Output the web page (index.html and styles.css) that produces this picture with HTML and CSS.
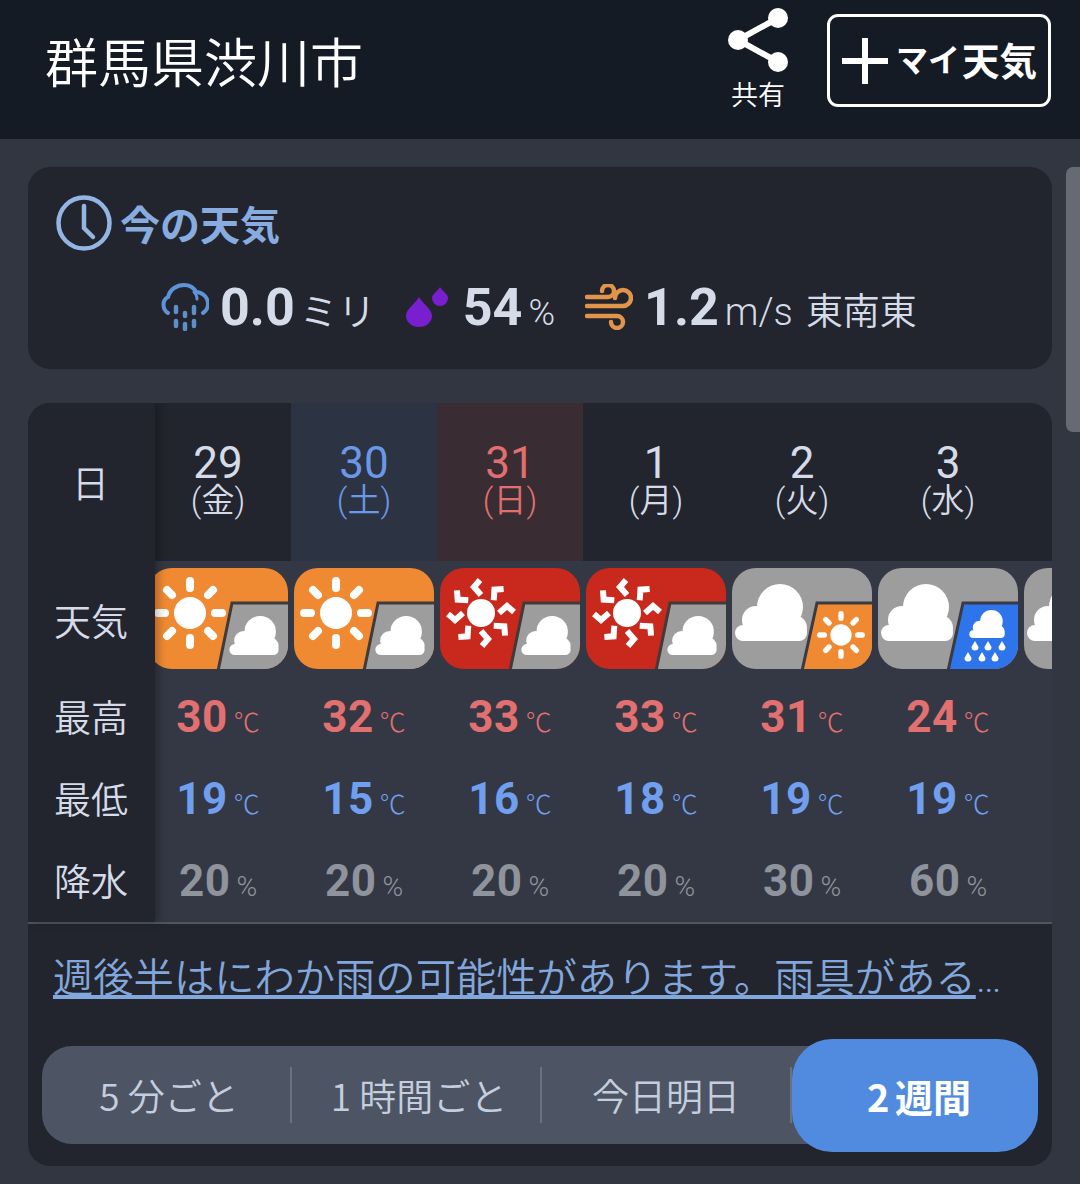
FILE: index.html
```html
<!DOCTYPE html>
<html lang="ja">
<head>
<meta charset="utf-8">
<title>群馬県渋川市</title>
<link rel="stylesheet" href="styles.css">
</head>
<body>
<svg class="defs" width="0" height="0" aria-hidden="true">
  <defs>
    <clipPath id="round"><rect width="140" height="101" rx="24"/></clipPath>
    <symbol id="cloud" viewBox="0 0 72 57">
      <circle cx="45" cy="23" r="23" fill="#fff"/>
      <circle cx="21" cy="36" r="14" fill="#fff"/>
      <circle cx="59" cy="44" r="13" fill="#fff"/>
      <rect y="41" width="72" height="16" rx="8" fill="#fff"/>
      <rect x="20" y="25" width="40" height="30" fill="#fff"/>
    </symbol>
    <symbol id="sun" viewBox="-36 -36 72 72">
      <circle r="16" fill="#fff"/>
      <g stroke="#fff" stroke-width="8" stroke-linecap="round" class="rays">
        <path d="M0-32V-25M0 32V25M-32 0H-25M32 0H25M-23-23L-18-18M23-23L18-18M-23 23L-18 18M23 23L18 18"/>
      </g>
    </symbol>
    <symbol id="hot" viewBox="-36 -36 72 72">
      <circle r="14" fill="#fff"/>
      <g fill="none" stroke="#fff" stroke-width="6">
        <path id="chev" d="M-1-33L-7-26L0-18"/>
        <use href="#chev" transform="rotate(45)"/>
        <use href="#chev" transform="rotate(90)"/>
        <use href="#chev" transform="rotate(135)"/>
        <use href="#chev" transform="rotate(180)"/>
        <use href="#chev" transform="rotate(225)"/>
        <use href="#chev" transform="rotate(270)"/>
        <use href="#chev" transform="rotate(315)"/>
      </g>
    </symbol>
    <symbol id="sun-cloud" viewBox="0 0 140 101">
      <g clip-path="url(#round)">
        <rect width="140" height="101" fill="#f08a32"/>
        <use href="#sun" x="6" y="9" width="72" height="72"/>
        <path d="M84 35H142V103H70Z" fill="#9d9d9d" stroke="#41393a" stroke-width="3"/>
        <use href="#cloud" x="81" y="48" width="50" height="39"/>
      </g>
    </symbol>
    <symbol id="hot-cloud" viewBox="0 0 140 101">
      <g clip-path="url(#round)">
        <rect width="140" height="101" fill="#c9281c"/>
        <use href="#hot" x="5" y="9" width="72" height="72"/>
        <path d="M84 35H142V103H70Z" fill="#9d9d9d" stroke="#41393a" stroke-width="3"/>
        <use href="#cloud" x="81" y="48" width="50" height="39"/>
      </g>
    </symbol>
    <symbol id="cloud-sun" viewBox="0 0 140 101">
      <g clip-path="url(#round)">
        <rect width="140" height="101" fill="#9d9d9d"/>
        <use href="#cloud" x="3" y="16" width="72" height="57"/>
        <path d="M85 35H142V103H70Z" fill="#f08a32" stroke="#3a3a42" stroke-width="3"/>
        <use href="#sun" x="85" y="43" width="48" height="48"/>
      </g>
    </symbol>
    <symbol id="cloud-rain" viewBox="0 0 140 101">
      <g clip-path="url(#round)">
        <rect width="140" height="101" fill="#9d9d9d"/>
        <use href="#cloud" x="3" y="16" width="72" height="57"/>
        <path d="M85 35H142V103H70Z" fill="#2e75ec" stroke="#3a3a42" stroke-width="3"/>
        <use href="#cloud" x="87" y="42" width="44" height="28"/>
        <g fill="#fff">
          <path id="drop" d="M97 73L100.500 79A3.500 3.500 0 1 1 93.500 79Z"/>
          <use href="#drop" x="13"/>
          <use href="#drop" x="27"/>
          <use href="#drop" x="-7" y="11"/>
          <use href="#drop" x="7" y="11"/>
          <use href="#drop" x="20" y="11"/>
        </g>
      </g>
    </symbol>
  </defs>
</svg>

<header class="top">
  <h1 class="place">群馬県渋川市</h1>
  <div class="share">
    <svg class="share-ico" viewBox="0 0 62 66">
      <path d="M51 11L11 33L51 55" fill="none" stroke="#fff" stroke-width="6"/>
      <circle cx="51" cy="11" r="10" fill="#fff"/>
      <circle cx="11" cy="33" r="10" fill="#fff"/>
      <circle cx="51" cy="55" r="10" fill="#fff"/>
    </svg>
    <span class="share-label">共有</span>
  </div>
  <div class="my">
    <svg class="plus" viewBox="0 0 46 46"><path d="M23 0V46M0 23H46" stroke="#fff" stroke-width="6"/></svg>
    <span class="my-kana">マイ</span><span class="my-kanji">天気</span>
  </div>
</header>

<main class="page">
  <section class="card now">
    <h2 class="now-title">
      <svg class="clock" viewBox="0 0 56 56" fill="none" stroke="#93b5e3" stroke-width="4.500">
        <circle cx="28" cy="28" r="25.500"/>
        <path d="M28 11V33L37 42" stroke-linecap="round"/>
      </svg>
      <span>今の天気</span>
    </h2>
    <div class="now-values">
      <svg class="ico rain-ico" viewBox="0 0 48 48">
        <path d="M7 30C1 26 1 17 7 14C9 6 16 2 23 2C29 2 33 5 35 9C41 9 47 14 47 21C47 25 45 28 42 30" fill="none" stroke="#5f93d8" stroke-width="4" stroke-linecap="round"/>
        <path d="M33 9C35 11 36 13 36 16" fill="none" stroke="#5f93d8" stroke-width="3" stroke-linecap="round"/>
        <g stroke="#5f8ec8" stroke-width="4.500" stroke-linecap="round">
          <path d="M15 24V29M15 38V43M24 30V33M24 41V46M33 24V30M33 38V43"/>
        </g>
      </svg>
      <b class="big rain-val">0.0</b><span class="unit mm">ミリ</span>
      <svg class="ico drop-ico" viewBox="0 0 42 40">
        <path d="M13 10C17 17 26 22 26 29A13 11 0 0 1 0 29C0 22 9 17 13 10Z" fill="#7a1fcf"/>
        <path d="M34 0C36 4 42 7 42 11A8 8 0 0 1 26 11C26 7 32 4 34 0Z" fill="#7a1fcf"/>
      </svg>
      <b class="big hum-val">54</b><span class="unit pct">%</span>
      <svg class="ico wind-ico" viewBox="0 0 48 46" fill="none" stroke="#e0954a" stroke-width="4.500" stroke-linecap="round">
        <path d="M2 13H23A6 6 0 1 0 17 7"/>
        <path d="M2 22H38A8 8 0 1 0 30 14"/>
        <path d="M2 32H32A6 6 0 1 1 26 38"/>
      </svg>
      <b class="big wind-val">1.2</b><span class="unit ms">m/s</span><span class="unit dir">東南東</span>
    </div>
  </section>

  <section class="card week">
    <div class="table">
      <div class="labels">
        <div class="lab lab-day">日</div>
        <div class="lab lab-icon">天気</div>
        <div class="lab lab-row">最高</div>
        <div class="lab lab-row">最低</div>
        <div class="lab lab-row">降水</div>
      </div>
      <div class="scroll">
        <div class="row row-days">
          <div class="day"><span class="num">29</span><span class="dow">(金)</span></div>
          <div class="day sat"><span class="num">30</span><span class="dow">(土)</span></div>
          <div class="day sun"><span class="num">31</span><span class="dow">(日)</span></div>
          <div class="day"><span class="num">1</span><span class="dow">(月)</span></div>
          <div class="day"><span class="num">2</span><span class="dow">(火)</span></div>
          <div class="day"><span class="num">3</span><span class="dow">(水)</span></div>
          <div class="day"></div>
        </div>
        <div class="row row-icons">
          <div class="cell"><svg class="wx"><use href="#sun-cloud"/></svg></div>
          <div class="cell"><svg class="wx"><use href="#sun-cloud"/></svg></div>
          <div class="cell"><svg class="wx"><use href="#hot-cloud"/></svg></div>
          <div class="cell"><svg class="wx"><use href="#hot-cloud"/></svg></div>
          <div class="cell"><svg class="wx"><use href="#cloud-sun"/></svg></div>
          <div class="cell"><svg class="wx"><use href="#cloud-rain"/></svg></div>
          <div class="cell"><svg class="wx"><use href="#cloud-sun"/></svg></div>
        </div>
        <div class="row row-val hi">
          <div class="cell"><b>30</b><i>℃</i></div>
          <div class="cell"><b>32</b><i>℃</i></div>
          <div class="cell"><b>33</b><i>℃</i></div>
          <div class="cell"><b>33</b><i>℃</i></div>
          <div class="cell"><b>31</b><i>℃</i></div>
          <div class="cell"><b>24</b><i>℃</i></div>
          <div class="cell"></div>
        </div>
        <div class="row row-val lo">
          <div class="cell"><b>19</b><i>℃</i></div>
          <div class="cell"><b>15</b><i>℃</i></div>
          <div class="cell"><b>16</b><i>℃</i></div>
          <div class="cell"><b>18</b><i>℃</i></div>
          <div class="cell"><b>19</b><i>℃</i></div>
          <div class="cell"><b>19</b><i>℃</i></div>
          <div class="cell"></div>
        </div>
        <div class="row row-val pop">
          <div class="cell"><b>20</b><i>%</i></div>
          <div class="cell"><b>20</b><i>%</i></div>
          <div class="cell"><b>20</b><i>%</i></div>
          <div class="cell"><b>20</b><i>%</i></div>
          <div class="cell"><b>30</b><i>%</i></div>
          <div class="cell"><b>60</b><i>%</i></div>
          <div class="cell"></div>
        </div>
      </div>
    </div>
    <a class="note" href="#">週後半はにわか雨の可能性があります。雨具があると安心です。</a>
    <nav class="tabs">
      <span class="tab shift">5 分ごと</span>
      <span class="tab shift">1 時間ごと</span>
      <span class="tab">今日明日</span>
      <span class="tab active">2 週間</span>
    </nav>
  </section>
  <div class="scrollbar"></div>
</main>
</body>
</html>
```
FILE: styles.css
```css
* { box-sizing: border-box; }
html, body { margin: 0; height: 1184px; overflow: hidden; }
body {
  background: #323641;
  color: #d5dbe8;
  font-family: Roboto, "Noto Sans CJK JP", sans-serif;
}
.defs { position: absolute; }
.top {
  height: 139px;
  background: #151b25;
  display: flex;
  align-items: flex-start;
  padding: 0 29px 0 45px;
}
.place {
  margin: 0;
  flex: 1;
  font-size: 53px;
  font-weight: 350;
  line-height: 121px;
  color: #fff;
  font-family: "Noto Sans CJK JP", sans-serif;
}
.share {
  width: 62px;
  margin-right: 38px;
  padding-top: 6px;
  display: flex;
  flex-direction: column;
  align-items: center;
}
.share-ico { width: 62px; height: 68px; display: block; }
.share-label {
  font-size: 27px;
  line-height: 36px;
  margin-top: 2px;
  color: #fff;
  font-weight: 350;
  font-family: "Noto Sans CJK JP", sans-serif;
  white-space: nowrap;
}
.my {
  margin-top: 14px;
  width: 224px;
  height: 93px;
  border: 3px solid #fff;
  border-radius: 11px;
  display: flex;
  align-items: center;
  padding: 0 0 5px 12px;
  color: #fff;
  font-family: "Noto Sans CJK JP", sans-serif;
  font-weight: 700;
}
.plus { width: 46px; height: 46px; margin: 5px 8px 0 0; flex: none; }
.my-kana { font-size: 32px; }
.my-kanji { font-size: 37.500px; margin-left: 2px; }

.page {
  position: relative;
  padding: 28px 28px 0;
}
.card {
  background: #22252d;
  border-radius: 22px;
  overflow: hidden;
}
.now { height: 202px; padding: 27px 28px 0; }
.now-title {
  margin: 0;
  height: 58px;
  display: flex;
  align-items: center;
  font-size: 40px;
  font-weight: 700;
  color: #88ace0;
  font-family: "Noto Sans CJK JP", sans-serif;
}
.clock { width: 56px; height: 56px; margin-right: 8px; flex: none; }
.now-values {
  margin-top: 25px;
  margin-left: 105px;
  height: 56px;
  display: flex;
  align-items: baseline;
  white-space: nowrap;
}
.ico { align-self: center; flex: none; margin-top: 4px; }
.rain-ico { width: 48px; height: 48px; }
.drop-ico { width: 42px; height: 40px; margin-left: 30px; }
.wind-ico { width: 48px; height: 46px; margin-left: 30px; }
.big { font-size: 52px; font-weight: 700; }
.rain-val { margin-left: 11px; }
.hum-val { margin-left: 15px; }
.wind-val { margin-left: 11px; }
.unit { font-size: 38px; font-weight: 300; }
.mm { margin-left: 5px; font-weight: 350; font-family: "Noto Sans CJK JP", sans-serif; }
.pct { margin-left: 6px; font-size: 36px; }
.ms { margin-left: 6px; }
.dir { margin-left: 13px; font-size: 37px; font-weight: 350; font-family: "Noto Sans CJK JP", sans-serif; }

.week { margin-top: 34px; height: 763px; }
.table {
  display: grid;
  grid-template-columns: 127px 1fr;
  height: 521px;
  border-bottom: 2px solid #50545e;
}
.labels {
  background: #22252d;
  position: relative;
  box-shadow: 4px 0 8px rgba(0, 0, 0, .25);
  z-index: 1;
}
.lab {
  display: flex;
  align-items: center;
  padding-left: 26px;
  font-size: 37px;
  font-weight: 350;
  font-family: "Noto Sans CJK JP", sans-serif;
}
.lab-day { height: 158px; padding-left: 44px; }
.lab-icon { height: 114px; padding-top: 4px; }
.lab-row { height: 82px; }
.scroll { overflow: hidden; background: #343844; }
.row { display: flex; margin-left: -10px; width: 1022px; }
.row-days { height: 158px; }
.row-icons { height: 114px; padding-top: 7px; }
.row-val { height: 82px; padding-top: 1px; }
.day, .cell { width: 146px; flex: none; }
.day {
  background: #22252d;
  display: flex;
  flex-direction: column;
  align-items: center;
  padding-top: 38px;
}
.num { font-size: 44px; line-height: 45px; }
.dow { font-size: 33px; line-height: 29px; font-weight: 350; }
.sat { background: #2c3342; color: #6a97e8; }
.sun { background: #3a2c33; color: #e07070; }
.cell { display: flex; justify-content: center; align-items: baseline; line-height: 82px; }
.wx { width: 140px; height: 101px; display: block; }
.row-val b { font-size: 44px; font-weight: 700; letter-spacing: .5px; }
.row-val i { font-style: normal; font-size: 26px; margin-left: 6px; font-weight: 300; }
.hi { color: #e27070; }
.lo { color: #6f9fee; }
.pop { color: #8f939c; }
.pop i { font-size: 28px; }
.note {
  display: block;
  margin: 28px 0 0 25px;
  width: 950px;
  height: 56px;
  line-height: 54px;
  font-size: 40.300px;
  font-weight: 350;
  color: #82a7dc;
  white-space: nowrap;
  overflow: hidden;
  text-overflow: ellipsis;
  text-decoration: underline;
}
.tabs {
  margin: 38px 14px 0;
  height: 98px;
  background: #4d5564;
  border-radius: 30px;
  display: flex;
  align-items: center;
}
.tab {
  width: 250px;
  height: 56px;
  line-height: 56px;
  text-align: center;
  font-size: 37px;
  font-weight: 350;
  color: #c4cede;
  border-right: 2px solid #6a7180;
  font-family: "Noto Sans CJK JP", sans-serif;
  white-space: nowrap;
}
.shift { padding-left: 6px; }
.tab.active {
  width: 246px;
  height: 113px;
  line-height: 113px;
  padding-left: 8px;
  border: 0;
  border-radius: 40px;
  background: #518bdf;
  color: #fff;
  font-size: 38px;
  font-weight: 700;
  word-spacing: -3px;
}
.scrollbar {
  position: absolute;
  right: 0;
  top: 28px;
  width: 14px;
  height: 265px;
  border-radius: 7px 0 0 7px;
  background: #676a72;
}
```
